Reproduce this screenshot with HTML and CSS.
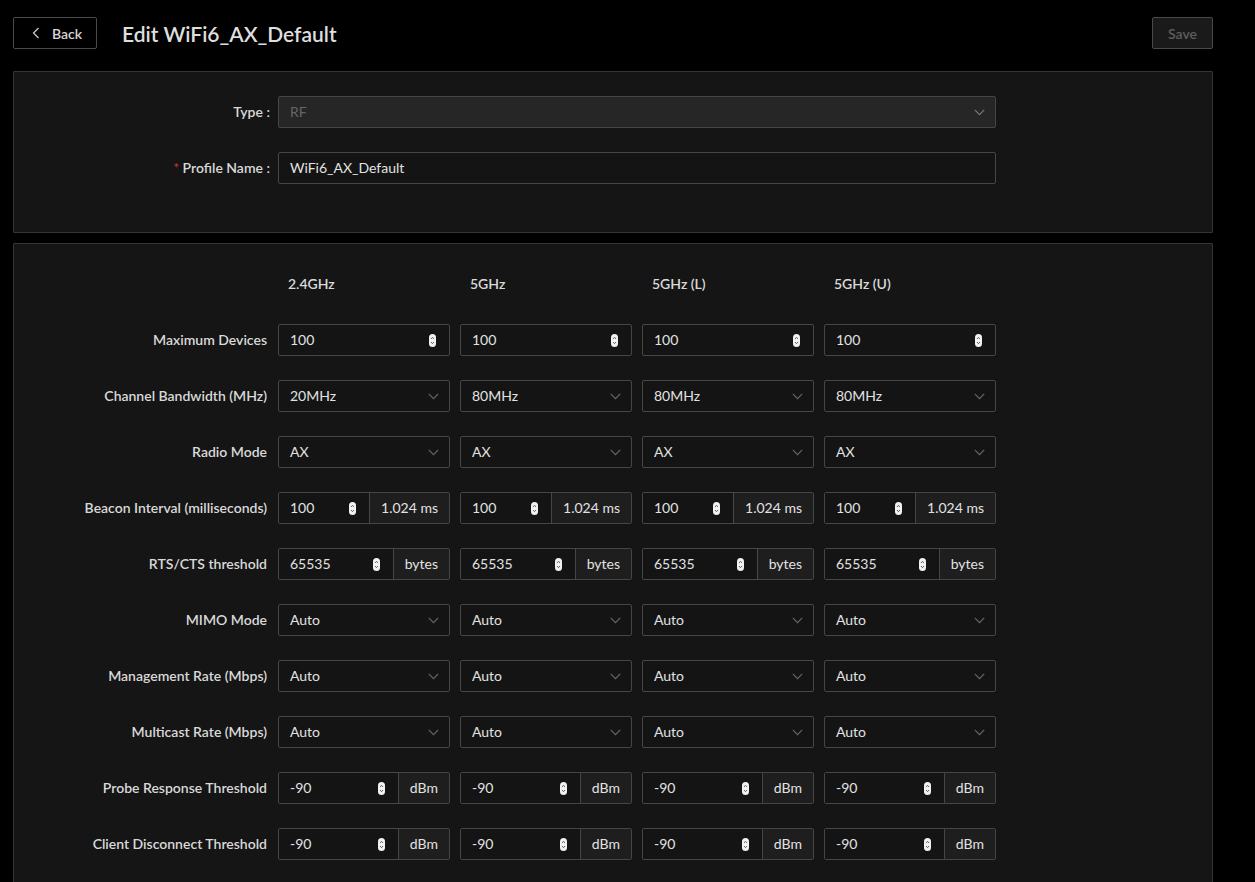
FILE: index.html
```html
<!DOCTYPE html>
<html>
<head>
<meta charset="utf-8">
<link rel="stylesheet" href="styles.css">
</head>
<body>
<div class="page">
  <header class="topbar">
    <button class="btn back"><svg class="chev-left" width="8" height="12" viewBox="0 0 8 12"><polyline points="6.5,1 1.5,6 6.5,11" fill="none" stroke="#cfcfcf" stroke-width="1.2"/></svg><span>Back</span></button>
    <h1 class="title">Edit WiFi6_AX_Default</h1>
    <button class="btn save">Save</button>
  </header>

  <section class="card card-basic">
    <div class="frow">
      <label class="flabel">Type :</label>
      <div class="ctl select disabled wide"><span class="val">RF</span><svg class="caret" width="11" height="7" viewBox="0 0 11 7"><polyline points="0.8,0.8 5.5,5.6 10.2,0.8" fill="none" stroke="#777" stroke-width="1.2"/></svg></div>
    </div>
    <div class="frow">
      <label class="flabel"><span class="req">*</span> Profile Name :</label>
      <div class="ctl wide"><span class="val">WiFi6_AX_Default</span></div>
    </div>
  </section>

  <section class="card card-radio">
    <div class="grid">
      <div class="rlabel"></div>
      <div class="colhead">2.4GHz</div>
      <div class="colhead">5GHz</div>
      <div class="colhead">5GHz (L)</div>
      <div class="colhead">5GHz (U)</div>
    </div>
    <div id="rows"></div>
  </section>
</div>
<script src="app.js"></script>
</body>
</html>
```
FILE: app.js
```js
const spin = '<svg class="spin" width="7" height="13" viewBox="0 0 7 13"><rect x="0" y="0" width="7" height="13" rx="3.5" fill="#f2f2f2"/><polyline points="2,5 3.5,3.3 5,5" fill="none" stroke="#555" stroke-width="0.9"/><polyline points="2,8 3.5,9.7 5,8" fill="none" stroke="#555" stroke-width="0.9"/></svg>';
const caret = '<svg class="caret" width="11" height="7" viewBox="0 0 11 7"><polyline points="0.8,0.8 5.5,5.6 10.2,0.8" fill="none" stroke="#666" stroke-width="1.2"/></svg>';
const rows = [
  ['Maximum Devices', 'num', ['100','100','100','100']],
  ['Channel Bandwidth (MHz)', 'sel', ['20MHz','80MHz','80MHz','80MHz']],
  ['Radio Mode', 'sel', ['AX','AX','AX','AX']],
  ['Beacon Interval (milliseconds)', 'add', ['100','100','100','100'], '1.024 ms'],
  ['RTS/CTS threshold', 'add', ['65535','65535','65535','65535'], 'bytes'],
  ['MIMO Mode', 'sel', ['Auto','Auto','Auto','Auto']],
  ['Management Rate (Mbps)', 'sel', ['Auto','Auto','Auto','Auto']],
  ['Multicast Rate (Mbps)', 'sel', ['Auto','Auto','Auto','Auto']],
  ['Probe Response Threshold', 'add', ['-90','-90','-90','-90'], 'dBm'],
  ['Client Disconnect Threshold', 'add', ['-90','-90','-90','-90'], 'dBm']
];
let html = '';
for (const r of rows) {
  html += '<div class="grid"><div class="rlabel">' + r[0] + '</div>';
  for (const v of r[2]) {
    if (r[1] === 'num') html += '<div class="ctl"><span class="val">' + v + '</span>' + spin + '</div>';
    else if (r[1] === 'sel') html += '<div class="ctl select"><span class="val">' + v + '</span>' + caret + '</div>';
    else html += '<div class="group"><div class="ctl inner"><span class="val">' + v + '</span>' + spin + '</div><div class="addon">' + r[3] + '</div></div>';
  }
  html += '</div>';
}
document.getElementById('rows').innerHTML = html;
```
FILE: styles.css
```css
html { overflow: hidden; }
body {
  margin: 0;
  background: #000;
  color: #dcdcdc;
  font-family: Lato, "Open Sans", "Liberation Sans", sans-serif;
  font-size: 14px;
}
.page { padding: 17px 42px 0 13px; }
.topbar {
  display: flex;
  align-items: center;
  height: 32px;
  margin-bottom: 22px;
}
.btn {
  font-family: inherit;
  height: 32px;
  border: 1px solid #4a4a4a;
  border-radius: 2px;
  font-size: 14px;
  font-weight: 600;
  display: flex;
  align-items: center;
  cursor: pointer;
}
.back {
  width: 84px;
  background: #000;
  color: #d6d6d6;
  padding: 0 0 0 18px;
  gap: 12px;
}
.title {
  margin: 0 0 0 25px;
  font-size: 21px;
  font-weight: 600;
  color: #dedede;
}
.save {
  margin-left: auto;
  width: 61px;
  justify-content: center;
  background: #1a1a1a;
  color: #5e5e5e;
}
.card {
  background: #151515;
  border: 1px solid #353535;
  border-radius: 1px;
}
.card-basic { padding: 24px 0 24px 0; margin-bottom: 10px; }
.frow {
  display: flex;
  align-items: center;
  margin-bottom: 24px;
}
.flabel {
  width: 256px;
  text-align: right;
  padding-right: 8px;
  font-size: 14px;
  font-weight: 600;
  color: #d9d9d9;
  padding-bottom: 2px;
}
.req { color: #c0392b; font-weight: 400; }
.ctl {
  box-sizing: border-box;
  height: 32px;
  border: 1px solid #464646;
  border-radius: 2px;
  background: #141414;
  display: flex;
  align-items: center;
  padding: 0 13px 0 11px;
  color: #e2e2e2;
  font-size: 14px;
}
.ctl .val { flex: 1; padding-bottom: 2px; }
.wide { width: 718px; }
.select.disabled { background: #262626; color: #666; }
.select { padding-right: 10px; }
.caret { display: block; }
.spin { display: block; }

.card-radio { padding: 24px 0 40px 0; }
.grid {
  display: grid;
  grid-template-columns: 254px repeat(4, 172px);
  column-gap: 10px;
  align-items: center;
  height: 32px;
  margin-bottom: 24px;
}
.rlabel {
  text-align: right;
  font-size: 14px;
  font-weight: 600;
  color: #d9d9d9;
  margin-right: 1px;
  white-space: nowrap;
  padding-bottom: 2px;
}
.colhead {
  padding-left: 10px;
  font-size: 14px;
  font-weight: 600;
  color: #d9d9d9;
  padding-bottom: 2px;
}
.group {
  display: flex;
  height: 32px;
  box-sizing: border-box;
  border: 1px solid #464646;
  border-radius: 2px;
  overflow: hidden;
}
.group .ctl.inner {
  border: none;
  border-radius: 0;
  height: 30px;
  flex: 1;
  min-width: 0;
}
.addon {
  border-left: 1px solid #464646;
  background: #1e1e1e;
  display: flex;
  align-items: center;
  padding: 0 11px 2px;
  font-size: 14px;
  color: #e2e2e2;
  white-space: nowrap;
}
```
